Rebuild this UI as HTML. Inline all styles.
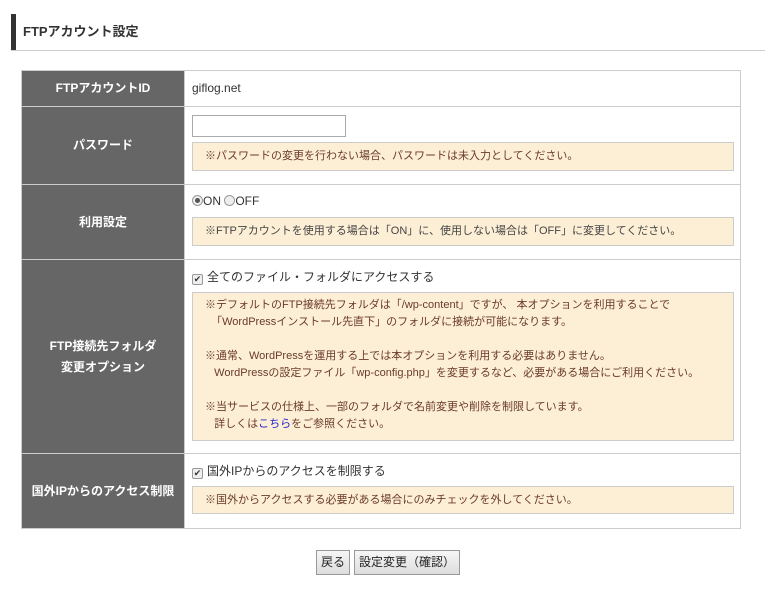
<!DOCTYPE html>
<html><head><meta charset="utf-8"><style>
*{box-sizing:border-box;margin:0;padding:0}
body{width:768px;height:612px;background:#fff;font-family:"Liberation Sans","Noto Sans CJK JP",sans-serif;color:#333;position:relative;overflow:hidden}
.title{position:absolute;left:11px;top:14px;height:36px;width:754px;border-left:5px solid #333;font-size:13px;font-weight:bold;padding-left:7px;line-height:36px;color:#333}
.uline{position:absolute;left:11px;top:50px;width:754px;height:1px;background:#ccc}
.row{position:absolute;left:21px;width:720px;border:1px solid #ccc;border-top:none}
.th{position:absolute;left:0;top:0;bottom:0;width:163px;background:#666;color:#fff;font-weight:bold;font-size:12px;display:flex;align-items:center;justify-content:center;text-align:center;line-height:21px;border-right:1px solid #ccc}
.td{position:absolute;left:170px;font-size:12px;color:#333}
.note{position:absolute;left:170px;width:542px;background:#fdefd6;border:1px solid #ccc;font-size:11px;color:#6a3a2a;padding:0 0 0 12px}
.chk{display:inline-block;width:11px;height:11px;border:1px solid #999;background:#eee;border-radius:2px;vertical-align:-1px;font-size:9px;line-height:9px;text-align:center;color:#333;margin-right:4px}
.rad{display:inline-block;width:11px;height:11px;border:1px solid #999;border-radius:50%;background:#eee;vertical-align:-1px;position:relative}
.rad.on:after{content:"";position:absolute;left:2px;top:2px;width:5px;height:5px;border-radius:50%;background:#555}
.btn{position:absolute;top:550px;height:25px;border:1px solid #999;background:linear-gradient(#f6f6f6,#ddd);font-size:12px;line-height:23px;text-align:center;color:#222}
</style></head><body>
<div class="title">FTPアカウント設定</div>
<div class="uline"></div>

<div class="row" style="top:70px;height:37px;border-top:1px solid #ccc">
<div class="th">FTPアカウントID</div>
<div class="td" style="top:10px">giflog.net</div></div>

<div class="row" style="top:107px;height:78px">
<div class="th">パスワード</div>
<div class="td" style="top:8px;width:154px;height:22px;border:1px solid #aaa;background:#fff"></div>
<div class="note" style="top:35px;height:29px;line-height:27px">※パスワードの変更を行わない場合、パスワードは未入力としてください。</div></div>

<div class="row" style="top:185px;height:75px">
<div class="th">利用設定</div>
<div class="td" style="top:9px"><span class="rad on"></span>ON <span class="rad"></span>OFF</div>
<div class="note" style="top:32px;height:29px;line-height:27px;color:#444">※FTPアカウントを使用する場合は「ON」に、使用しない場合は「OFF」に変更してください。</div></div>

<div class="row" style="top:260px;height:194px">
<div class="th">FTP接続先フォルダ<br>変更オプション</div>
<div class="td" style="top:8px"><span class="chk">✔</span>全てのファイル・フォルダにアクセスする</div>
<div class="note" style="top:32px;height:149px;line-height:17px;padding-top:4px">※デフォルトのFTP接続先フォルダは「/wp-content」ですが、 本オプションを利用することで<br>&nbsp;&nbsp;「WordPressインストール先直下」のフォルダに接続が可能になります。<br><br>※通常、WordPressを運用する上では本オプションを利用する必要はありません。<br>&nbsp;&nbsp;&nbsp;WordPressの設定ファイル「wp-config.php」を変更するなど、必要がある場合にご利用ください。<br><br>※当サービスの仕様上、一部のフォルダで名前変更や削除を制限しています。<br>&nbsp;&nbsp;&nbsp;詳しくは<span style="color:#22c">こちら</span>をご参照ください。</div></div>

<div class="row" style="top:454px;height:75px">
<div class="th">国外IPからのアクセス制限</div>
<div class="td" style="top:8px"><span class="chk">✔</span>国外IPからのアクセスを制限する</div>
<div class="note" style="top:32px;height:28px;line-height:26px">※国外からアクセスする必要がある場合にのみチェックを外してください。</div></div>

<div class="btn" style="left:316px;width:34px">戻る</div>
<div class="btn" style="left:354px;width:106px">設定変更（確認）</div>
</body></html>
